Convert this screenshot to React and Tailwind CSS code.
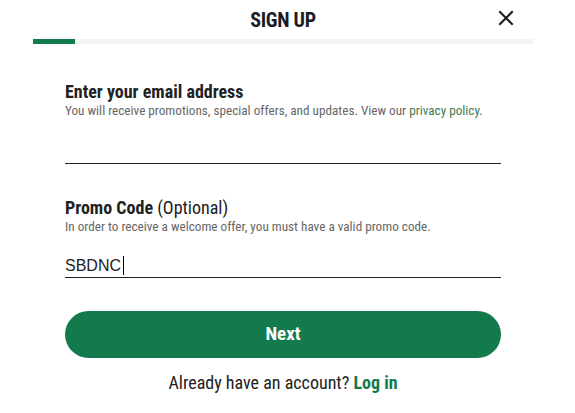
import { useState } from 'react';

function CloseIcon() {
  return (
    <svg width="16" height="16" viewBox="0 0 16 16" fill="none" stroke="#1a1a1a" strokeWidth="2" strokeLinecap="square">
      <path d="M2 2L14 14M14 2L2 14" />
    </svg>
  );
}

export default function App() {
  const [email, setEmail] = useState('');
  const [promo, setPromo] = useState('SBDNC');

  return (
    <div className="min-h-screen bg-white font-['Liberation_Sans_Narrow','Roboto_Condensed',Roboto,sans-serif] text-[#1d1d1d]">
      <div className="ml-[33px] w-[500px]">
        <div className="grid h-[39px] grid-cols-[1fr_auto_1fr] items-center">
          <div />
          <h1 className="text-[20px] font-bold uppercase tracking-[-0.3px] text-[#1c1c24]">Sign Up</h1>
          <button className="mr-[19px] justify-self-end pb-[4px]" aria-label="Close">
            <CloseIcon />
          </button>
        </div>
        <div className="h-[5px] w-full bg-[#f4f4f4]">
          <div className="h-full w-[42px] bg-[#137a4e]" />
        </div>

        <form className="px-[32px] pt-[38px]" onSubmit={(e) => e.preventDefault()}>
          <label htmlFor="email" className="block text-[18px] font-bold leading-[20px] text-[#222]">
            Enter your email address
          </label>
          <p className="mt-[1px] text-[13.2px] leading-[16px] text-[#666]">
            You will receive promotions, special offers, and updates. View our{' '}
            <a href="#" className="text-[#3d7a55]">privacy policy</a>.
          </p>
          <input
            id="email"
            type="email"
            value={email}
            onChange={(e) => setEmail(e.target.value)}
            className="mt-[15px] block h-[30px] w-full border-b border-[#222] bg-transparent text-[17px] outline-none"
          />

          <label htmlFor="promo" className="mt-[34px] block text-[18px] leading-[20px] text-[#222]">
            <span className="font-bold">Promo Code</span> (Optional)
          </label>
          <p className="mt-[1px] text-[13.2px] leading-[16px] text-[#666]">
            In order to receive a welcome offer, you must have a valid promo code.
          </p>
          <div className="relative mt-[19px]">
            <input
              id="promo"
              type="text"
              value={promo}
              onChange={(e) => setPromo(e.target.value)}
              className="block h-[24px] w-full border-b border-[#222] bg-transparent font-['Liberation_Sans',Arial,sans-serif] text-[16px] text-[#222] outline-none"
            />
            <span aria-hidden="true" className="absolute left-[58px] top-[2px] h-[19px] w-px bg-black" />
          </div>

          <button
            type="submit"
            className="mt-[33px] flex h-[47px] w-full items-center justify-center rounded-full bg-[#137a4e] text-[19px] font-bold text-white"
          >
            Next
          </button>

          <p className="mt-[11px] text-center text-[18px] text-[#222]">
            Already have an account?{' '}
            <a href="#" className="font-bold text-[#137a4e]">Log in</a>
          </p>
        </form>
      </div>
    </div>
  );
}
